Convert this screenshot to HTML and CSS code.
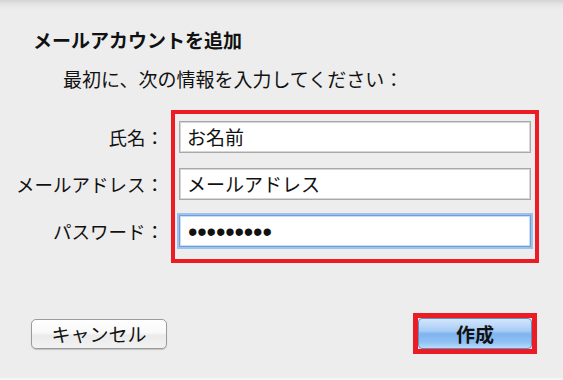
FILE: index.html
```html
<!DOCTYPE html>
<html lang="ja">
<head>
<meta charset="utf-8">
<title>メールアカウントを追加</title>
<link rel="stylesheet" href="styles.css">
</head>
<body>
<div class="dialog">
  <h1 class="title">メールアカウントを追加</h1>
  <p class="lead">最初に、次の情報を入力してください：</p>
  <div class="form">
    <div class="labels">
      <div class="label">氏名：</div>
      <div class="label">メールアドレス：</div>
      <div class="label">パスワード：</div>
    </div>
    <div class="highlight fields">
      <div class="field">お名前</div>
      <div class="field">メールアドレス</div>
      <div class="field focused"><span class="dots">•••••••••</span></div>
    </div>
  </div>
  <div class="actions">
    <button class="btn cancel" type="button">キャンセル</button>
    <div class="highlight-btn">
      <button class="btn create" type="button">作成</button>
    </div>
  </div>
</div>
</body>
</html>
```

FILE: styles.css
```css
html, body {
  margin: 0;
  padding: 0;
}
body {
  width: 563px;
  height: 380px;
  overflow: hidden;
  background: linear-gradient(#d4d4d4 0px, #e6e6e6 5px, #ededed 10px, #ededed 100%);
  font-family: "Noto Sans CJK JP", "Noto Sans", sans-serif;
  color: #111;
}
.dialog {
  display: flex;
  flex-direction: column;
  padding: 28px 26px 0 0;
  box-sizing: border-box;
  height: 380px;
  border-bottom: 2px solid #f6f6f6;
}
.title {
  margin: 0 0 0 33px;
  font-size: 19px;
  line-height: 24px;
  font-weight: bold;
}
.lead {
  margin: 15px 0 0 63px;
  font-size: 19px;
  line-height: 24px;
}
.form {
  display: flex;
  margin-top: 19px;
}
.labels {
  width: 164px;
  flex: none;
  margin-right: 7px;
  padding-top: 11px;
  display: flex;
  flex-direction: column;
  gap: 15px;
}
.label {
  height: 32px;
  line-height: 32px;
  font-size: 18.5px;
  text-align: right;
  white-space: nowrap;
}
.highlight {
  border: 4px solid #ec1c24;
}
.fields {
  width: 352px;
  flex: none;
  padding: 7px 4px 12px 4px;
  display: flex;
  flex-direction: column;
  gap: 15px;
}
.field {
  height: 32px;
  box-sizing: border-box;
  background: #fff;
  border: 1px solid #a9a9a9;
  box-shadow: inset 0 0 0 1px #d6d6d6;
  padding-left: 7px;
  font-size: 19px;
  line-height: 30px;
  color: #111;
}
.field.focused {
  border: 1px solid #6d9fd8;
  box-shadow: 0 0 0 2px #9cc3ee, inset 0 0 0 1px #c8dcf3;
}
.dots {
  font-family: "Liberation Sans", sans-serif;
  font-size: 27px;
  letter-spacing: -0.15px;
  line-height: 30px;
  position: relative;
  top: 1px;
  left: 1px;
}
.actions {
  display: flex;
  justify-content: space-between;
  align-items: center;
  margin-top: 50px;
  padding-left: 31px;
}
.btn {
  font-family: "Noto Sans CJK JP", "Noto Sans", sans-serif;
  font-size: 19px;
  color: #111;
  padding: 0;
  margin: 0;
  cursor: default;
}
.cancel {
  width: 136px;
  height: 30px;
  line-height: 26px;
  border: 1px solid #9b9b9b;
  border-radius: 5px;
  background: linear-gradient(#ffffff 0%, #f8f8f8 45%, #ebebeb 55%, #f2f2f2 100%);
  box-shadow: 0 1px 1px rgba(0, 0, 0, 0.18);
}
.highlight-btn {
  border: 5px solid #ec1c24;
  display: flex;
}
.create {
  width: 114px;
  height: 31px;
  line-height: 27px;
  font-weight: bold;
  border: 1px solid #6a8cbc;
  border-radius: 4px;
  background: linear-gradient(#d3e6fb 0%, #a9cdf6 40%, #7fb4ef 52%, #8fc1f4 80%, #b8dcfb 100%);
}
```
